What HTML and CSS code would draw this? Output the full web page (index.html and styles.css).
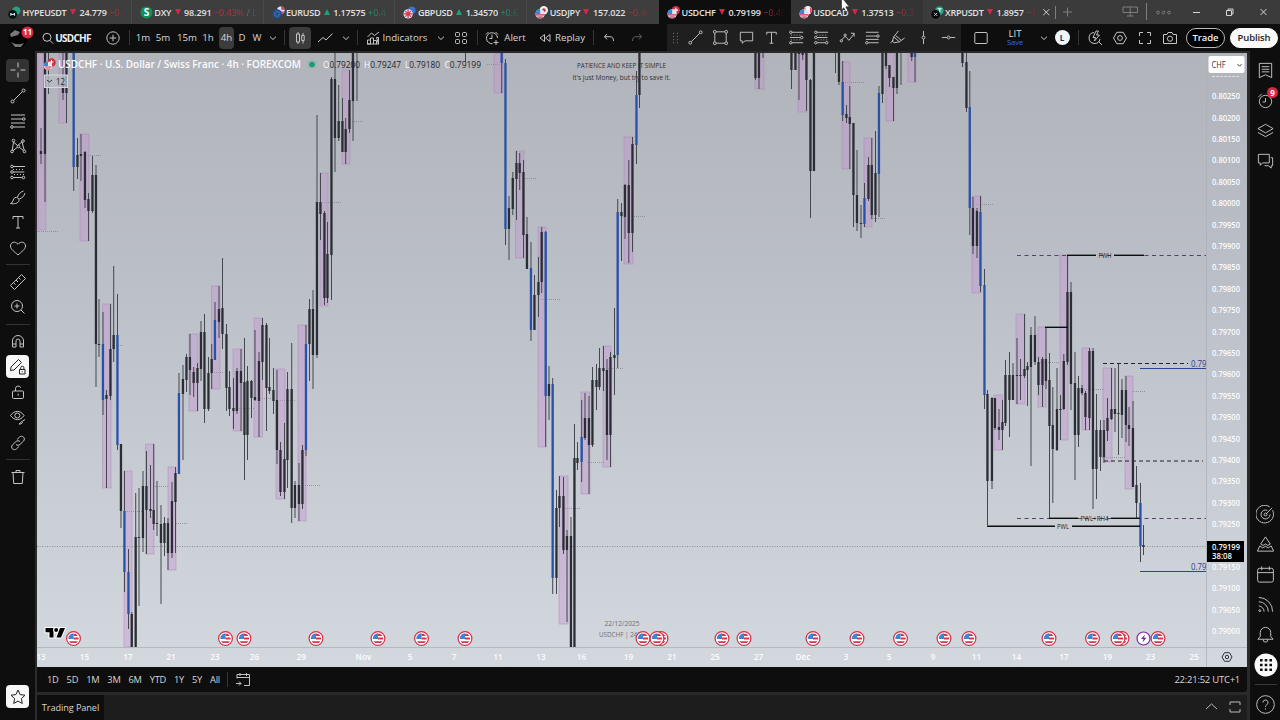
FILE: index.html
```html
<!DOCTYPE html>
<html lang="en">
<head>
<meta charset="utf-8">
<title>USDCHF 4h</title>
<link rel="stylesheet" href="styles.css">
</head>
<body>
<svg class="defs" aria-hidden="true">
  <symbol id="chev" viewBox="0 0 20 20"><path d="M7 8.700l3 2.800 3-2.800"/></symbol>
  <symbol id="search" viewBox="0 0 20 20"><circle cx="10" cy="9.300" r="4"/><path d="M12.900 12.300l3 3.200"/></symbol>
  <symbol id="plus" viewBox="0 0 20 20"><circle cx="10" cy="10" r="6.200"/><path d="M10 6.700v6.600M6.700 10h6.600"/></symbol>
  <symbol id="candles" viewBox="0 0 20 20"><path d="M6.500 6h3v8h-3zM8 4v2M8 14v2M11.700 7.500h2.500v5h-2.500zM13 5v2.500M13 12.500v3"/></symbol>
  <symbol id="line" viewBox="0 0 20 20"><path d="M3 14l5-4.500 3 2.500 6.500-6.500"/></symbol>
  <symbol id="ind" viewBox="0 0 20 20"><path d="M4.500 16v-4h3v4zM7.500 16V10h3v6M10.500 12.500h3V16M13.500 9.500h2V16zM4 16h12M4.500 9l4-4 3 2.500L16 4"/></symbol>
  <symbol id="grid4" viewBox="0 0 20 20"><rect x="4.500" y="4.500" width="4" height="4" rx="1"/><rect x="11.500" y="4.500" width="4" height="4" rx="1"/><rect x="4.500" y="11.500" width="4" height="4" rx="1"/><rect x="11.500" y="11.500" width="4" height="4" rx="1"/></symbol>
  <symbol id="alert" viewBox="0 0 20 20"><path d="M15.500 10a5.500 5.500 0 1 0-5 5.700M10 6.500v4h-2.500M4 6.500l2.500-2.500M13.500 4l2.500 2.500M14 12v5M11.500 14.500h5"/></symbol>
  <symbol id="replay" viewBox="0 0 20 20"><path d="M9.500 6.500v7l-4.500-3.500zM15 6.500v7l-4.500-3.500z"/></symbol>
  <symbol id="undo" viewBox="0 0 20 20"><path d="M8 6L5.500 8.700 8 11.400M5.500 8.700h5.500q3.500 0 3.500 4.300"/></symbol>
  <symbol id="redo" viewBox="0 0 20 20"><path d="M12 6l2.500 2.700L12 11.400M14.500 8.700H9q-3.500 0-3.500 4.300"/></symbol>
  <symbol id="dots" viewBox="0 0 20 20"><path d="M8 5v1.300M12 5v1.300M8 8.300v1.300M12 8.300v1.300M8 11.600v1.300M12 11.600v1.300M8 14.900v1.300M12 14.900v1.300"/></symbol>
  <symbol id="trend" viewBox="0 0 20 20"><circle cx="4.500" cy="15.500" r="1.500"/><circle cx="15.500" cy="4.500" r="1.500"/><path d="M5.700 14.300l8.700-8.700"/></symbol>
  <symbol id="rect" viewBox="0 0 20 20"><circle cx="4" cy="4" r="1.500"/><circle cx="16" cy="4" r="1.500"/><circle cx="4" cy="16" r="1.500"/><circle cx="16" cy="16" r="1.500"/><path d="M5.500 4h9M5.500 16h9M4 5.500v9M16 5.500v9"/></symbol>
  <symbol id="note" viewBox="0 0 20 20"><path d="M3.500 4.500h13v9H8.500L5.500 16v-2.500h-2z"/></symbol>
  <symbol id="text" viewBox="0 0 20 20"><path d="M5 7V4.500h10V7M10 4.500v11.500M8 16h4"/></symbol>
  <symbol id="long" viewBox="0 0 20 20"><path d="M5 4.500h12M3 10h11M5 15.500h12"/><path d="M4 7.500h12M4 12.500h12" stroke-dasharray="1 2"/><circle cx="4" cy="4.500" r="1.300"/><circle cx="4" cy="15.500" r="1.300"/><circle cx="15.500" cy="10" r="1.300"/></symbol>
  <symbol id="short" viewBox="0 0 20 20"><path d="M5 4.500h12M5.300 10h11M5.300 15.500h9"/><path d="M5 7.500h11M6 12.500h10" stroke-dasharray="1 2"/><circle cx="4" cy="4.500" r="1.300"/><circle cx="4" cy="10" r="1.300"/><circle cx="4" cy="15.500" r="1.300"/><circle cx="15.500" cy="15.500" r="1.300"/></symbol>
  <symbol id="path" viewBox="0 0 20 20"><path d="M4 12.500l3.500-4 4 4.500L17 6M13.500 5.500H17V9"/><circle cx="3.500" cy="13.500" r="1.200"/><circle cx="7.500" cy="7.500" r="1.200"/></symbol>
  <symbol id="fib" viewBox="0 0 20 20"><path d="M3 4.500h13.500M3 8.500h11.500M5.500 15.500h11M3 12h13.500"/><circle cx="15.700" cy="8.500" r="1.300"/><circle cx="4" cy="15.500" r="1.300"/></symbol>
  <symbol id="brush" viewBox="0 0 20 20"><path d="M2.500 16.500c3-.5 2-4.500 4.500-6 2-.8 4.500 1 4 3.300-.8 2.700-5 3.400-8.500 2.700zM9.500 10c1-3 3-5 6-6M11.300 12c2.700-1 4.700-2.500 5.700-6"/></symbol>
  <symbol id="hi" viewBox="0 0 20 20"><path d="M2.500 16l3-3M6 9.500l5-6.500M6 9.500l6 5 5.500-4M6 9.500L4.500 14l2 1.500 5.500-1M8 8l6 5"/></symbol>
  <symbol id="vline" viewBox="0 0 20 20"><path d="M10 3v5.500M10 11.500V17"/><circle cx="10" cy="10" r="1.500"/></symbol>
  <symbol id="hline" viewBox="0 0 20 20"><path d="M3 10h5.500M11.500 10H17"/><circle cx="10" cy="10" r="1.500"/></symbol>
  <symbol id="square" viewBox="0 0 20 20"><rect x="3.800" y="4.500" width="12.400" height="11" rx="1"/></symbol>
  <symbol id="quick" viewBox="0 0 20 20"><path d="M9 4.500a5.500 5.500 0 1 0 6 6.500M13.500 13.500L17 17M11 3L8 9.500h2.500L9.500 13l5-6h-3l2-4z"/></symbol>
  <symbol id="hex" viewBox="0 0 20 20"><path d="M6.800 4.300h6.400l3.300 5.700-3.300 5.700H6.800L3.500 10z"/><circle cx="10" cy="10" r="2.400"/></symbol>
  <symbol id="full" viewBox="0 0 20 20"><path d="M4.500 8V4.500H8M12 4.500h3.500V8M15.500 12v3.500H12M8 15.500H4.500V12"/></symbol>
  <symbol id="cam" viewBox="0 0 20 20"><path d="M3.500 6.500H7L8 4.500h4l1 2h3.500v9h-13z"/><circle cx="10" cy="10.700" r="2.600"/></symbol>
  <symbol id="cross" viewBox="0 0 20 20"><path d="M10 2.500v5M10 12.500v5M2.500 10h5M12.500 10h5"/></symbol>
  <symbol id="fibl" viewBox="0 0 20 20"><path d="M3 4h14M3 8h11.500M3 12h14M6 16h11"/><circle cx="15.800" cy="8" r="1.300"/><circle cx="4" cy="16" r="1.300"/></symbol>
  <symbol id="xabcd" viewBox="0 0 20 20"><circle cx="4" cy="15.500" r="1.300"/><circle cx="5.500" cy="4.500" r="1.300"/><circle cx="10.500" cy="10.500" r="1.300"/><circle cx="15" cy="5" r="1.300"/><circle cx="16.500" cy="15.500" r="1.300"/><path d="M4.300 14L5.500 6l4 3.500 4.500-3.500 2.200 8M5 14.700l4.500-3.500M11.500 11.300l4 3.300"/></symbol>
  <symbol id="heart" viewBox="0 0 20 20"><path d="M10 17C7 14 2.500 11.500 2.500 8c0-4 4.700-5.300 7.500-1.700C12.800 2.700 17.500 4 17.500 8c0 3.500-4.500 6-7.500 9z"/></symbol>
  <symbol id="ruler" viewBox="0 0 20 20"><path d="M2.500 13.500L13.500 2.500 17.500 6.500 6.500 17.500zM5.500 10.500l2 2M8 8l2 2M10.500 5.500l2 2"/></symbol>
  <symbol id="zoom" viewBox="0 0 20 20"><circle cx="9" cy="9" r="5.500"/><path d="M13 13l3.500 3.500M9 6.500v5M6.500 9h5"/></symbol>
  <symbol id="magnet" viewBox="0 0 20 20"><path d="M4.500 16V10a5.500 5.500 0 0 1 11 0v6h-3.500V10a2 2 0 0 0-4 0v6zM4.500 13H8M12 13h3.500"/></symbol>
  <symbol id="penlock" viewBox="0 0 20 20"><path d="M2.500 13.500l.5-3.500 7.500-7.500 3 3-7.500 7.500zM11.500 12.500h5.500v4.500h-5.500zM12.700 12.500v-1.700a1.600 1.600 0 0 1 3.200 0v1.700M14.200 14.200v1"/></symbol>
  <symbol id="lock" viewBox="0 0 20 20"><rect x="4.500" y="9" width="11" height="7.500" rx="1"/><path d="M7.500 9V6.500a2.700 2.700 0 0 1 5.200-.8M10.200 11.700v2"/></symbol>
  <symbol id="eye" viewBox="0 0 20 20"><path d="M2.500 8.500C6.500 3 12.500 3 16 8.500 12.500 14 6.500 14 2.500 8.500z"/><circle cx="9.300" cy="8.500" r="2.500"/><path d="M11 17c2 0 1-2 2.500-2.200 1.500 0 1 2.500-2.500 2.200zM14 14.500l3-2"/></symbol>
  <symbol id="link" viewBox="0 0 20 20"><path d="M9 6.500l2.500-2.400c3-2.500 6.500 1.200 4 4L12 11.500c-1.200 1-2.800 1-4 0M11 13.500l-2.500 2.400c-3 2.500-6.500-1.200-4-4L8 8.500c1.200-1 2.800-1 4 0"/></symbol>
  <symbol id="trash" viewBox="0 0 20 20"><path d="M3.500 5.500h13M8 5.500v-2h4v2M5 5.500l.7 11h8.600l.7-11"/></symbol>
  <symbol id="star" viewBox="0 0 20 20"><path d="M10 3l2.100 4.600 4.900.6-3.600 3.400.9 4.900L10 14.100l-4.300 2.400.9-4.900L3 8.200l4.900-.6z"/></symbol>
  <symbol id="list" viewBox="0 0 20 20"><path d="M3.500 2.500h13v15l-6.500-3-6.500 3zM6 6h8M6 8.700h8M6 11.400h8"/></symbol>
  <symbol id="clock" viewBox="0 0 20 20"><circle cx="10" cy="11" r="6.500"/><path d="M10 7.500V11.500H7M2.500 6.500l3.500-3.500"/></symbol>
  <symbol id="layers" viewBox="0 0 20 20"><path d="M10 3.500l8 4.500-8 4.500-8-4.500zM2 12l8 4.500 8-4.500"/></symbol>
  <symbol id="chat" viewBox="0 0 20 20"><path d="M2.500 3.500h11.500v9H7L4.500 15v-2.500h-2zM15.500 7h2v8.500h-1.500V18L13 15.500H9"/></symbol>
  <symbol id="target" viewBox="0 0 20 20"><path d="M17.500 5.500A9.300 9.300 0 1 1 14.500 2M14.700 10A4.700 4.700 0 1 1 12 5.700M10.500 9.500L17 3"/><circle cx="10" cy="10" r="1.500"/></symbol>
  <symbol id="mount" viewBox="0 0 20 20"><path d="M10 2l5 7.500-2.500 1.500L10 9.500 7.500 11 5 9.500zM4 11.500L1.500 17h17L16 11.500l-3 2-3-1.500-3 1.500z"/></symbol>
  <symbol id="cal" viewBox="0 0 20 20"><rect x="1.700" y="3.500" width="16.600" height="14.500" rx="2"/><path d="M1.700 8h16.600M6 1.500V5.500M14 1.500V5.500"/></symbol>
  <symbol id="rss" viewBox="0 0 20 20"><path d="M3 11.500a6 6 0 0 1 5.500 6M3 7a10.500 10.500 0 0 1 10 10.500M3 2.500a15 15 0 0 1 14.500 15"/><circle cx="4" cy="16.500" r="1"/></symbol>
  <symbol id="bell" viewBox="0 0 20 20"><path d="M2 15l2.500-3V8a5.500 5.500 0 0 1 11 0v4l2.500 3zM7.500 15.500a2.500 2.500 0 0 0 5 0"/></symbol>
  <symbol id="help" viewBox="0 0 20 20"><circle cx="10" cy="10" r="9.300"/><path d="M7.300 8a2.700 2.700 0 1 1 3.800 2.400q-1.100.5-1.100 2M10 14v1.300"/></symbol>
  <symbol id="goto" viewBox="0 0 20 20"><path d="M4 8.500v-4h12.500v11H11M4 7.500h12.500M7 3v3M13.500 3v3M3 13.500h5M6 11.500l2 2-2 2"/></symbol>
  <symbol id="flag" viewBox="-8 -8 16 16"><circle r="6.900" fill="#fff" stroke="#d02f45" stroke-width="1.200"/><circle r="5.200" fill="#fff"/><path d="M0-4.800H2.200L4.500-2.600H0zM0-.9H5.100V1H-5.100V.9H0zM-4.400 2.800H4.400L2.800 4.500H-2.800z" fill="#d6364b" stroke="none"/><path d="M0-5.200V.6H-5.200A5.200 5.200 0 0 1 0-5.200z" fill="#3d86d6" stroke="none"/></symbol>
</svg>

<header class="tabs">
  <div class="tab"><svg class="pair" viewBox="0 0 14 14"><circle cx="9" cy="5" r="4.500" fill="#25a17f"/><circle cx="5" cy="9" r="4.700" fill="#07120f"/><path d="M3 7.500v3M3 9h4M7 7.500v3" stroke="#cde" stroke-width="1.200"/></svg><b>HYPEUSDT</b><u class="dn"></u><span>24.779</span><em class="neg">−0.</em></div>
  <div class="tab"><svg class="pair" viewBox="0 0 14 14"><circle cx="7" cy="7" r="6.500" fill="#10905b"/><text x="7" y="11" class="dollar">S</text></svg><b>DXY</b><u class="dn"></u><span>98.291</span><em class="neg wide">−0.43% <q>/ L</q></em></div>
  <div class="tab"><svg class="pair" viewBox="0 0 14 14"><circle cx="9.500" cy="4.500" r="4" fill="#dfe3ee"/><path d="M10 1h2l1.500 3H10zM9 6h4l-1 2H9z" fill="#d6364b"/><circle cx="5.500" cy="8.500" r="5" fill="#1c4f9c"/><circle cx="5.500" cy="8.500" r="2.600" fill="none" stroke="#8f9f70" stroke-dasharray="1 1"/></svg><b>EURUSD</b><u class="up"></u><span>1.17575</span><em class="pos">+0.4</em></div>
  <div class="tab"><svg class="pair" viewBox="0 0 14 14"><circle cx="9.500" cy="4.500" r="4" fill="#3d72c6"/><circle cx="5.500" cy="8.500" r="5" fill="#dfe3ee"/><path d="M5.500 4v9M1 8.500h9M2.500 5.500l6 6M8.500 5.500l-6 6" stroke="#d6364b" stroke-width="1.300"/></svg><b>GBPUSD</b><u class="up"></u><span>1.34570</span><em class="pos">+0.6</em></div>
  <div class="tab last"><svg class="pair" viewBox="0 0 14 14"><circle cx="9.500" cy="4.500" r="4.500" fill="#f2f2f4"/><circle cx="9.500" cy="4.500" r="2" fill="#d02f45"/><circle cx="5.500" cy="8.500" r="5" fill="#dfe3ee"/><path d="M1 9.500h9M2.500 12h6" stroke="#d6364b" stroke-width="1.200"/><path d="M5.500 3.500v5h-5a5 5 0 0 1 5-5z" fill="#3d86d6"/></svg><b>USDJPY</b><u class="dn"></u><span>157.022</span><em class="neg">−0.46</em></div>
  <div class="tab on"><svg class="pair" viewBox="0 0 14 14"><circle cx="9.500" cy="4.500" r="4.500" fill="#d02f45"/><path d="M9.500 2v5M7 4.500h5" stroke="#fff" stroke-width="1.300"/><circle cx="5.500" cy="8.500" r="5" fill="#dfe3ee"/><path d="M1 9.500h9M2.500 12h6" stroke="#d6364b" stroke-width="1.200"/><path d="M5.500 3.500v5h-5a5 5 0 0 1 5-5z" fill="#3d86d6"/></svg><b>USDCHF</b><u class="dn"></u><span>0.79199</span><em class="neg">−0.46</em></div>
  <div class="tab hover"><svg class="pair" viewBox="0 0 14 14"><circle cx="9.500" cy="4.500" r="4.500" fill="#f2f2f4"/><path d="M7 1v7a4.500 4.500 0 0 1 0-7M12 1v7a4.500 4.500 0 0 0 0-7" fill="#d02f45"/><circle cx="5.500" cy="8.500" r="5" fill="#dfe3ee"/><path d="M1 9.500h9M2.500 12h6" stroke="#d6364b" stroke-width="1.200"/><path d="M5.500 3.500v5h-5a5 5 0 0 1 5-5z" fill="#3d86d6"/></svg><b>USDCAD</b><u class="dn"></u><span>1.37513</span><em class="neg">−0.3</em></div>
  <div class="tab end"><svg class="pair" viewBox="0 0 14 14"><circle cx="9" cy="5" r="4.700" fill="#25a17f"/><path d="M7 3h4.500M9.500 3v4" stroke="#fff" stroke-width="1.200"/><circle cx="5" cy="9" r="4.700" fill="#07090c"/><path d="M3.300 7.300l3.400 3.400M6.700 7.300l-3.400 3.400" stroke="#ccd"/></svg><b>XRPUSDT</b><u class="dn"></u><span>1.8957</span><em class="neg">−1</em></div>
  <svg class="win" viewBox="0 0 226 24"><path d="M-10.700 9.200l6 6M-4.700 9.200l-6 6"/><path class="dim" d="M13.500 7.500v9M9 12h9M1.500 6v13M92.500 3v17"/><path class="dim" d="M69 7h14.500v5.500H69zM76.200 7v9M73 16h6.500"/><g class="dim"><circle cx="104" cy="12.500" r="1.400"/><circle cx="109.500" cy="12.500" r="1.400"/><circle cx="115" cy="12.500" r="1.400"/></g><path d="M139 12.500h7M172.500 10.500h5v5h-5zM174 10.500V9h5v5h-1.500M206.500 9l6 6M212.500 9l-6 6"/></svg>
</header>

<nav class="toolbar">
  <div class="bar-left">
    <div class="cell"><svg class="avatar" viewBox="0 0 32 26"><circle cx="15" cy="13.500" r="9.500" fill="#020202"/><path d="M7 9l5-4 5 2-2 3-7 2zM8 17q6 4 13 1l-3 4h-6z" fill="#75777a"/><circle cx="24.500" cy="7.500" r="6" fill="#dc2740"/><text x="24.500" y="10.200" class="badge">11</text></svg></div>
    <div class="cell"><svg class="ic"><use href="#search"/></svg></div>
    <div class="cell bold">USDCHF</div><i></i>
    <div class="cell"><svg class="ic"><use href="#plus"/></svg></div><i></i><s></s><i></i>
    <div class="cell">1m</div><div class="cell">5m</div><div class="cell">15m</div><div class="cell">1h</div><i></i>
    <div class="cell sel">4h</div><div class="cell">D</div><div class="cell">W</div>
    <div class="cell"><svg class="ic"><use href="#chev"/></svg></div><i></i><s></s><i></i>
    <div class="cell sel"><svg class="ic"><use href="#candles"/></svg></div><i></i>
    <div class="cell"><svg class="ic"><use href="#line"/></svg></div>
    <div class="cell"><svg class="ic"><use href="#chev"/></svg></div><s></s><i></i>
    <div class="cell"><svg class="ic"><use href="#ind"/></svg></div>
    <div class="cell">Indicators</div>
    <div class="cell"><svg class="ic"><use href="#chev"/></svg></div>
    <div class="cell"><svg class="ic"><use href="#grid4"/></svg></div><i></i><s></s><i></i>
    <div class="cell"><svg class="ic"><use href="#alert"/></svg></div>
    <div class="cell">Alert</div><i></i>
    <div class="cell"><svg class="ic"><use href="#replay"/></svg></div>
    <div class="cell">Replay</div><i></i><s></s><i></i>
    <div class="cell"><svg class="ic"><use href="#undo"/></svg></div><i></i>
    <div class="cell faint"><svg class="ic"><use href="#redo"/></svg></div>
  </div>
  <div class="bar-draw">
    <div class="cell grip"><svg class="ic"><use href="#dots"/></svg></div>
    <div class="cell"><svg class="ic"><use href="#trend"/></svg></div>
    <div class="cell"><svg class="ic"><use href="#rect"/></svg></div>
    <div class="cell"><svg class="ic"><use href="#note"/></svg></div>
    <div class="cell"><svg class="ic"><use href="#text"/></svg></div>
    <div class="cell"><svg class="ic"><use href="#long"/></svg></div>
    <div class="cell"><svg class="ic"><use href="#short"/></svg></div>
    <div class="cell"><svg class="ic"><use href="#path"/></svg></div>
    <div class="cell"><svg class="ic"><use href="#fib"/></svg></div>
    <div class="cell"><svg class="ic"><use href="#hi"/></svg></div>
    <div class="cell"><svg class="ic"><use href="#vline"/></svg></div>
    <div class="cell"><svg class="ic"><use href="#hline"/></svg></div>
  </div>
  <div class="bar-right">
    <i></i><div class="cell"><svg class="ic"><use href="#square"/></svg></div><i></i>
    <div class="cell layout"><span>LIT</span><small>Save</small></div><i></i>
    <div class="cell"><svg class="ic"><use href="#chev"/></svg></div>
    <div class="cell"><span class="user">L</span></div><i></i><s></s><i></i>
    <div class="cell"><svg class="ic"><use href="#quick"/></svg></div>
    <div class="cell"><svg class="ic"><use href="#hex"/></svg></div>
    <div class="cell"><svg class="ic"><use href="#full"/></svg></div>
    <div class="cell"><svg class="ic"><use href="#cam"/></svg></div><i></i>
    <div class="pill">Trade</div><i></i><div class="pill white">Publish</div>
  </div>
</nav>

<main class="work">
  <aside class="tools">
    <div class="tool shade"><svg class="ic"><use href="#cross"/></svg></div>
    <div class="tool"><svg class="ic"><use href="#trend"/></svg></div>
    <div class="tool"><svg class="ic"><use href="#fibl"/></svg></div>
    <div class="tool"><svg class="ic"><use href="#xabcd"/></svg></div>
    <div class="tool"><svg class="ic"><use href="#short"/></svg></div>
    <div class="tool"><svg class="ic"><use href="#brush"/></svg></div>
    <div class="tool"><svg class="ic"><use href="#text"/></svg></div>
    <div class="tool"><svg class="ic"><use href="#heart"/></svg></div>
    <hr>
    <div class="tool"><svg class="ic"><use href="#ruler"/></svg></div>
    <div class="tool"><svg class="ic"><use href="#zoom"/></svg></div>
    <hr>
    <div class="tool"><svg class="ic"><use href="#magnet"/></svg></div>
    <div class="tool lit"><svg class="ic"><use href="#penlock"/></svg></div>
    <div class="tool"><svg class="ic"><use href="#lock"/></svg></div>
    <div class="tool"><svg class="ic"><use href="#eye"/></svg></div>
    <div class="tool"><svg class="ic"><use href="#link"/></svg></div>
    <hr>
    <div class="tool"><svg class="ic"><use href="#trash"/></svg></div>
    <div class="tool lit fav"><svg class="ic"><use href="#star"/></svg></div>
  </aside>

  <section class="center">
    <svg id="chart" class="chart" viewBox="37 53 1210 614"></svg>
    <div class="ranges">
      <span>1D</span><span>5D</span><span>1M</span><span>3M</span><span>6M</span><span>YTD</span><span>1Y</span><span>5Y</span><span>All</span>
      <s></s><svg class="ic"><use href="#goto"/></svg>
      <time>22:21:52 UTC+1</time>
    </div>
    <footer class="panel">
      <div class="panel-tab">Trading Panel</div>
      <svg class="panel-ic" viewBox="0 0 46 24"><path d="M5 14l5.500-5 5.500 5M29 10V7h3M36 7h3v3M39 14v3h-3M32 17h-3v-3M32 7h4M32 17h4"/></svg>
    </footer>
  </section>

  <aside class="side">
    <div class="wid"><svg class="ic"><use href="#list"/></svg></div>
    <div class="wid"><svg class="ic"><use href="#clock"/></svg><span class="nine">9</span></div>
    <div class="wid"><svg class="ic"><use href="#layers"/></svg></div>
    <div class="wid"><svg class="ic"><use href="#chat"/></svg></div>
    <div class="grow"></div>
    <div class="wid"><svg class="ic"><use href="#target"/></svg></div>
    <div class="wid"><svg class="ic"><use href="#mount"/></svg></div>
    <div class="wid"><svg class="ic"><use href="#cal"/></svg></div>
    <div class="wid"><svg class="ic"><use href="#rss"/></svg></div>
    <div class="wid"><svg class="ic"><use href="#bell"/></svg></div>
    <div class="wid"><svg class="apps" viewBox="0 0 24 24"><circle cx="12" cy="12" r="11.500" fill="#fafafa"/><path d="M6 7.300h12M6 12h12M6 16.700h12" stroke="#111" stroke-width="2.600" stroke-dasharray="2.600 2.100"/></svg></div>
    <hr>
    <div class="wid"><svg class="ic"><use href="#help"/></svg></div>
  </aside>
</main>
<svg class="cursor" viewBox="0 0 9 14"><path d="M.5-3v13l2.300-2.200 2 4 2-1-2-4h3.500z" fill="#fff" stroke="#222" stroke-width=".6"/></svg>
<script src="chart.js"></script>
</body>
</html>
```
FILE: styles.css
```css
* { box-sizing: border-box; }
body {
  margin: 0; width: 1280px; height: 720px; overflow: hidden;
  display: flex; flex-direction: column; position: relative;
  background: #2a2a2b; color: #d6d6d6;
  font: 500 9.7px "Open Sans", "Noto Sans", sans-serif;
}
svg { fill: none; stroke: none; display: block; overflow: visible; }
.defs { position: absolute; width: 0; height: 0; }
.ic { width: 20px; height: 20px; flex: none; stroke: #c4c4c4; stroke-width: 1; }

.tabs { display: flex; height: 24px; flex: none; background: #3b3b3b; }
.tab {
  width: 131.8px; flex: none; display: flex; align-items: center; gap: 3.5px;
  padding-left: 8px; overflow: hidden; white-space: nowrap;
  border-right: 1px solid #4a4a4a; font-size: 9px; background: #3e3e3e;
}
.tab.last { border-right: 0; border-radius: 0 0 4px 0; }
.tab.on { background: #0e0e0e; border: 0; }
.tab.hover { background: #343434; border: 0; border-radius: 0 0 0 4px; }
.tab.end { background: none; border: 0; padding-right: 21px; }
.tab b { font-weight: 600; color: #e2e2e2; letter-spacing: -0.25px; }
.tab span { color: #e0e0e0; font-weight: 600; letter-spacing: -0.15px; }
.tab em {
  font-style: normal; margin-left: -1px; width: 25px; flex: none;
  -webkit-mask-image: linear-gradient(90deg, #000 10%, transparent 90%);
  mask-image: linear-gradient(90deg, #000 10%, transparent 90%);
}
.tab em.wide {
  width: 46px;
  -webkit-mask-image: linear-gradient(90deg, #000 50%, transparent 98%);
  mask-image: linear-gradient(90deg, #000 50%, transparent 98%);
}
.tab.end em { width: 14px; }
.tab q { quotes: none; color: #999; }
.pair { width: 13px; height: 13px; flex: none; margin-right: -2px; }
.dollar { font: 700 11px "Open Sans", sans-serif; fill: #fff; text-anchor: middle; }
.neg { color: #c82b43; }
.pos { color: #1f9f79; }
.dn, .up { width: 0; height: 0; border: 3.3px solid transparent; flex: none; }
.dn { border-top: 6px solid #cf2a45; border-bottom: 0; }
.up { border-bottom: 6px solid #1f9f79; border-top: 0; }
.win { flex: 1; height: 24px; stroke: #d4d4d4; }
.win .dim { stroke: #7e7e7e; }

.toolbar { display: flex; height: 27px; flex: none; background: #0e0e0e; }
.cell { display: flex; align-items: center; justify-content: center; white-space: nowrap; height: 27px; min-width: 0; }
.toolbar s, .ranges s { width: 1px; background: #373737; height: 15px; align-self: center; }
.bar-left {
  display: grid; width: 667px; flex: none;
  grid-template-columns: 36px 22px 30px 15px 20px 6px 1px 4px 18px 22px 26px 16px 3px 15px 16px 14px 18px 2px 1px 4px 22px 4px 20px 22px 1px 5px 20px 44px 28px 12px 10px 1px 4px 20px 26px 7px 20px 30px 8px 1px 6px 18px 10px 18px;
}
.bold { font-weight: 700; font-size: 10px; color: #eee; letter-spacing: -0.75px; }
.sel { background: #3c3c3c; border-radius: 4px; height: 22px; align-self: center; }
.faint { opacity: .45; }
.avatar { width: 32px; height: 26px; flex: none; margin-left: 2px; }
.badge { font: 700 8px "Open Sans", sans-serif; fill: #fff; text-anchor: middle; }
.bar-draw { display: flex; width: 294px; flex: none; background: #1f1f1f; }
.bar-draw .cell { flex: 1; }
.bar-draw .grip { flex: 0 0 16px; opacity: .5; }
.bar-draw .ic { width: 19px; height: 19px; }
.bar-right {
  display: grid;
  grid-template-columns: 10px 20px 9px 30px 5px 18px 18px 7px 1px 4px 24px 26px 24px 26px 3px 39px 5px 48px;
}
.layout { flex-direction: column; color: #ddd; padding-top: 1px; }
.layout span { line-height: 11px; margin-top: -4px; }
.layout small { font-size: 7.5px; line-height: 10px; height: 8px; color: #2f6cf0; margin-top: -2px; }
.user { width: 15px; height: 15px; border-radius: 50%; background: #eef5fd; color: #234; font-size: 8px; line-height: 15px; text-align: center; font-weight: 700; }
.pill { height: 20px; align-self: center; border-radius: 10px; border: 1px solid #bbb; background: #000; color: #f2f2f2; font-weight: 600; font-size: 9.5px; letter-spacing: -.1px; line-height: 17px; text-align: center; }
.pill.white { background: #fafafa; color: #222; border-color: #fafafa; }

.work { display: flex; flex: 1; min-height: 0; }
.tools { width: 35px; margin-right: 2px; background: #0e0e0e; padding-top: 6.5px; display: flex; flex-direction: column; align-items: center; }
.tool { width: 23px; height: 23px; margin: 1.2px 0; flex: none; display: flex; align-items: center; justify-content: center; border-radius: 4px; }
.shade { background: #333; }
.lit { background: #f7f7f7; }
.lit .ic { stroke: #222; }
.fav { margin-top: auto; margin-bottom: 12px; }
.tools hr { width: 24px; height: 1px; border: 0; background: #333; margin: 3.8px 0; flex: none; }

.center { width: 1210px; flex: none; padding-top: 2px; display: flex; flex-direction: column; }
.chart { width: 1210px; height: 614px; flex: none; overflow: hidden; }
.ranges { height: 25px; flex: none; background: #0e0e0e; display: flex; align-items: center; gap: 8px; padding: 0 7px 0 10px; font-size: 9.3px; letter-spacing: -.25px; border-radius: 0 0 3px 0; }
.ranges span:last-of-type { margin-right: -1px; }
.ranges .ic { margin-left: -3px; }
.ranges time { margin-left: auto; font-size: 9.5px; }
.panel { margin-top: 3px; flex: 1; display: flex; justify-content: space-between; background: #1d1d1d; }
.panel-tab { width: 67px; background: #0e0e0e; text-align: center; line-height: 25px; font-size: 9.2px; letter-spacing: -.1px; white-space: nowrap; }
.panel-ic { width: 46px; height: 24px; stroke: #bbb; }

.side { flex: 1; margin-left: 3px; background: #0e0e0e; padding: 4.2px 0 0 1px; display: flex; flex-direction: column; align-items: center; }
.wid { height: 30.1px; flex: none; display: flex; align-items: center; position: relative; }
.side .ic { width: 19px; height: 19px; }
.apps { width: 24px; height: 24px; }
.grow { flex: 1; }
.side hr { width: 22px; height: 1px; border: 0; background: #3a3a3a; margin: 4px 0 5px; }
.nine { position: absolute; right: -3px; top: 2px; width: 11px; height: 11px; border-radius: 50%; background: #dc2740; color: #fff; font-size: 8px; line-height: 11px; font-weight: 700; text-align: center; }
.cursor { position: absolute; left: 841px; top: 0; width: 9px; height: 14px; overflow: hidden; }

.chart text { font-family: "Open Sans", "Noto Sans", sans-serif; }
.price { font-size: 8.5px; font-weight: 600; fill: #fbfcfe; }
.date { font-size: 8.2px; font-weight: 600; fill: #fbfcfe; text-anchor: middle; }
.title { font-size: 10.5px; font-weight: 600; fill: #fbfbfd; }
.ohlc { font-size: 9px; fill: #22252b; }
.ohlc tspan { fill: #fbfbfd; }
.memo { font-size: 8px; fill: #2e3138; text-anchor: middle; }
.stamp { font-size: 8px; fill: #6d7077; }
.tag { font-size: 7px; fill: #1b1d22; text-anchor: middle; }
.level { font-size: 9px; fill: #27408f; }
```
FILE: chart.js
```javascript
const svg = document.getElementById('chart');
let out = '';
const rect = (x, y, w, h, a) => { out += `<rect x="${x}" y="${y}" width="${w}" height="${h}" ${a}/>`; };
const line = (x1, y1, x2, y2, a) => { out += `<line x1="${x1}" y1="${y1}" x2="${x2}" y2="${y2}" ${a}/>`; };
const text = (x, y, cls, s, w) => {
  out += `<text x="${x}" y="${y}" class="${cls}"${w ? ` textLength="${w}" lengthAdjust="spacingAndGlyphs"` : ''}>${s}</text>`;
};

out += '<defs><linearGradient id="bg" x1="0" y1="0" x2="0" y2="1"><stop offset="0" stop-color="#b1b4ba"/><stop offset=".35" stop-color="#babec6"/><stop offset=".7" stop-color="#c8ccd3"/><stop offset="1" stop-color="#d3d7de"/></linearGradient></defs>';
rect(37, 53, 1210, 614, 'fill="url(#bg)"');

// last price
line(37, 546.5, 1206, 546.5, 'stroke="#8c8f96" stroke-dasharray="1 1.500"');

// session opening levels: x1, y, x2
[[37,231,59],[88,155,102],[112,345,123],[125,511,143],[153,486,168],[176,523,188],[212,372,224],[233,408,254],[258,398,273],[280,400,295],[305,485,320],[324,202,341],[352,121,363],[487,64,500],[525,178,537],[541,299,560],[563,508,580],[587,462,605],[608,368,624],[634,216,646],[845,82,864],[870,218,885],[976,204,994],[1040,362,1060],[1084,389,1104],[1100,457,1125],[1132,391,1146]]
  .forEach(([a, y, b]) => line(a, y + .5, b, y + .5, 'stroke="#85888f" stroke-width=".8" stroke-dasharray="1 1"'));

// session boxes: x1, y1, x2, y2
[[38,53,46,230],[59,53,66.5,123],[80,134,89,241],[102.5,304,111,488],[124,471,132,647],[145.5,444,154,554],[168,467,176,570],[189,334,198,411],[211.5,286,220,389],[233,349,242,431],[254,318,262.5,437],[276,369,285,499],[298,325,306,521],[320,173,328,306],[342,70,350,164],[494,53,503,93],[515.5,151,524,258],[538,227,546,447],[559,476,568,624],[581,392,590,494],[603,346,611,467],[624,137,633,264],[755,53,764,89],[798,53,807,112],[842,62,850,169],[864,138,872,227],[886,53,894,121],[908,53,916,82],[972,196,981,293],[994,395,1002.5,450],[1016,314,1025,404],[1038,327,1046,407],[1060,255,1068,440],[1082,348,1090,430],[1103,368,1112,462],[1125,376,1133,489]]
  .forEach(([a, y, b, z]) => rect(a, y, b - a, z - y, 'fill="#c490d2" fill-opacity=".36" stroke="#a878b4" stroke-opacity=".55" stroke-width=".7"'));

// candles: x, high, body top, body bottom, low, 1 = blue
const candles = [
[41,128,151,154,164],[45,53,53,154,202],[48.5,53,53,53,94],[63,53,85,93,100],[66.5,53,53,93,123],[73.7,53,53,167,191,1],[77.5,138,155,167,179],[81,134,154,156,181],[85,151,152,200,208],[88.5,193,199,211,241],[92.5,156,175,211,213],[96,165,175,344,387],[99,299,344,345,357],[103,312,344,400,415,1],[106.5,390,395,399,488],[110.5,304,349,396,400],[113.7,266,335,349,362],[117.5,294,335,445,450,1],[121,444,444,511,528],[124.5,471,511,572,592,1],[128.5,549,572,614,629,1],[131.8,612,614,647,647],[135.7,493,537,647,647],[139,488,537,538,606],[143,471,486,538,552],[146.5,451,486,510,554],[150.5,465,509,511,518],[153.7,444,510,524,530],[157,481,523,524,536],[161,505,524,543,604],[164.5,517,523,543,556],[168,518,523,553,570],[172,482,501,553,558],[175.5,467,473,502,553],[179,373,393,474,474,1],[183,365,379,394,460],[186.5,354,357,380,392],[190,334,357,370,395],[193.7,367,372,383,397],[197.5,363,368,383,411],[201,321,332,369,381],[204.5,314,332,409,423],[208.5,357,373,409,411],[211.7,344,359,373,389],[215,302,320,360,360,1],[219,286,309,322,338],[222.5,258,308,334,349],[226.5,324,334,388,411],[229.5,371,387,409,416],[233.5,378,408,411,429],[237,368,371,411,414],[241,349,371,383,431],[244.5,338,382,435,480],[247.5,366,381,435,460],[251.5,380,381,398,418],[255,330,397,400,401],[259,352,361,401,437],[262.5,318,325,362,380],[266.5,323,325,388,431],[269.5,338,387,391,394],[273.5,368,390,401,414],[277,370,400,450,464],[280.5,442,450,492,496],[284.5,423,459,492,499],[287.5,372,389,460,488],[291.7,343,389,508,523],[295,481,485,508,518],[299,463,485,504,521],[302.5,445,450,504,509],[306,325,344,450,456,1],[309.5,299,309,344,381],[313,290,309,355,389],[317,115,202,355,358],[320.5,173,202,214,240],[324.5,211,213,298,305],[327.5,222,254,298,303],[331.5,77,79,255,300],[335,53,79,138,172],[338.7,85,121,138,141],[342.5,98,121,152,152],[345.7,118,129,152,164],[349.5,70,100,129,133],[353,53,53,101,141],[357,53,53,53,101],
[465.5,53,53,53,62],[501.7,53,53,63,93,1],[505.5,59,63,229,245,1],[509,196,208,229,260],[512.8,172,178,209,215],[516.5,151,163,179,220],[519.7,153,163,173,190],[523.5,160,172,235,258],[527,217,234,269,269],[531,242,268,330,341,1],[534.5,275,295,330,330],[538.5,257,282,295,317],[541.7,227,232,282,293],[545.7,231,232,396,447,1],[549,366,384,396,420],[552.7,378,384,578,594,1],[556.5,490,508,578,594],[559.5,476,496,508,527],[563.5,477,496,550,554],[567,530,536,550,622],[571,517,536,647,647],[574.5,424,458,647,647],[577.5,442,458,463,470],[581.7,400,437,462,482,1],[585,393,418,438,440],[589,396,418,445,494],[592.5,367,380,445,447],[596.5,364,380,387,410],[599.5,348,368,387,390],[603.5,346,368,371,391],[607,359,370,435,460],[610.5,352,357,435,467],[614.5,308,355,358,395],[617.7,199,212,355,368,1],[621.5,203,212,216,261],[625,184,185,217,239],[628.8,160,185,233,263],[632.5,137,144,233,252],[636.5,71,95,145,164,1],[639.5,53,53,95,108],
[755.5,53,53,78,80],[759,53,53,78,89],[763,53,53,53,58],[791.5,53,53,70,89],[795.5,53,53,70,70],[799,53,53,54,100],[802.7,53,53,55,60],[806.5,53,53,80,111],[810.5,79,80,171,218],[814,53,53,171,171],[835.5,53,53,53,73],[839,53,53,82,85],[842.7,61,82,115,121,1],[846.5,105,114,118,123],[849.8,86,117,124,169],[853.5,123,123,195,227],[857,150,195,223,231],[861,205,223,224,238],[864.5,183,198,224,227,1],[868.5,157,165,199,201],[871.8,138,165,215,219],[875.5,131,173,215,222],[879,86,93,174,217,1],[882.5,53,53,94,103],[886,53,53,66,69],[889.5,65,65,78,87],[893.5,77,77,88,121],[897,53,53,88,94],[901,53,53,53,85],[911.7,53,53,57,61],[915,53,53,57,82,1],[962.5,53,53,63,67],[966.5,53,62,108,112],[969.8,71,107,208,235,1],[973,197,208,246,254],[977,208,211,246,258],[980.5,196,212,286,292,1],[984.5,269,285,395,409,1],
[987.5,390,394,481,525],[992,397,398,481,489],[995,398,398,428,430],[999,409,427,430,440],[1002.5,400,422,430,450],[1005.5,360,375,423,426],[1009.5,352,375,400,437],[1013,363,375,400,400],[1017,338,375,376,404],[1020.5,359,375,376,400],[1024.5,314,369,376,378],[1027.5,362,366,370,406],[1031,327,335,367,466],[1035,316,335,362,365],[1038.5,357,362,385,395],[1042.5,357,359,385,407],[1046,327,359,381,389],[1049.5,353,380,426,518],[1052.8,387,425,449,503],[1057,368,409,450,451],[1060.5,395,409,410,440],[1063.8,354,361,409,410],[1067.5,255,292,362,365],[1071,282,292,384,410],[1075,352,383,435,480],[1078.5,376,388,435,447],[1082,385,388,393,395],[1085.5,391,393,417,430],[1089.5,348,351,418,430],[1093,348,351,469,509],[1096.5,394,430,469,499],[1100.5,420,430,457,471],[1104,420,430,457,463],[1107.5,398,418,431,441],[1111.5,368,409,419,420],[1115,368,409,414,432],[1118.5,363,413,414,455],[1122,379,390,415,438],[1126,376,390,425,442],[1129,407,425,429,446],[1133,401,428,487,487],[1136.5,466,485,503,518],[1140.5,483,503,546,562,1],[1143.5,525,545,547,555]];
candles.forEach(([x, h, t, b, l, blue]) => {
  rect(x - .5, h, 1, l - h, 'fill="#45484e"');
  if (b > t) rect(x - 1.2, t, 2.3, b - t, `fill="${blue ? '#2752a8' : '#2b2d34'}"`);
});

// weekly levels
const purple = 'stroke="#59406f" stroke-width="1" stroke-dasharray="4 3.500"';
const solid = 'stroke="#0c0d10" stroke-width="1.400"';
const dash = 'stroke="#22242b" stroke-width="1.200" stroke-dasharray="4 3"';
line(1017, 255.5, 1206, 255.5, purple);
line(1067, 255.3, 1096, 255.3, solid); line(1114, 255.3, 1144, 255.3, solid);
line(1045, 327.3, 1068, 327.3, solid);
line(1017, 518.5, 1206, 518.5, purple);
line(1049, 518.3, 1078, 518.3, solid); line(1111, 518.3, 1140, 518.3, solid);
line(987, 526.3, 1055, 526.3, solid); line(1072, 526.3, 1140, 526.3, solid);
line(1103, 363.5, 1188, 363.5, dash);
line(1104, 461, 1203, 461, dash);
const navy = 'stroke="#2d4590" stroke-width="1"';
line(1140, 368.5, 1206, 368.5, navy); line(1140, 571.5, 1206, 571.5, navy);
text(1105, 258, 'tag', 'PWH', 13); text(1094.5, 521, 'tag', 'PWL+RH4', 28); text(1063, 529, 'tag', 'PWL', 12);
text(1191, 366.5, 'level', '0.79', 15.5); text(1191, 569.5, 'level', '0.79', 15.5);

// axes
line(1206.5, 53, 1206.5, 667, 'stroke="#a9adb5" stroke-width=".7"');
line(37, 647.5, 1247, 647.5, 'stroke="#aeb1b9" stroke-width=".8"');
for (let i = 0; i <= 25; i++) text(1212, 99.1 + i * 21.4, 'price', (0.8025 - i * 0.0005).toFixed(5), 28);
line(1212, 76.5, 1240, 76.5, 'stroke="#eceef3" stroke-opacity=".8" stroke-dasharray="3 1"');
rect(1207, 541, 37, 21, 'fill="#000"');
text(1212, 550, 'price', '0.79199', 28); text(1212, 559, 'price', '38:08', 20);
rect(1208.500, 56, 36, 17, 'rx="2" fill="#fff"');
out += '<text x="1211.500" y="68" font-size="8.500" fill="#30333a" textLength="14" lengthAdjust="spacingAndGlyphs">CHF</text><path d="M1237.500 64.200l2 2 2-2" stroke="#333"/>';
[['13',41],['15',84.5],['17',128],['21',171],['23',215],['26',254.5],['29',301.5],['Nov',363.5],['5',410],['7',454],['11',498],['13',541],['16',581.5],['19',628.5],['21',672],['25',715],['27',758.5],['Dec',803],['3',846],['5',889],['9',933],['11',976.5],['14',1016.5],['17',1064],['19',1107.5],['23',1150.5],['25',1194]]
  .forEach(([s, x]) => text(x, 659.500, 'date', s));
out += '<g transform="translate(1227 657)" stroke="#30333a"><path d="M-2.500-4.300h5L5 0 2.500 4.300h-5L-5 0z"/><circle r="1.700"/></g>';

// notes
text(621.5, 68.3, 'memo', 'PATIENCE AND KEEP IT SIMPLE', 89);
text(621.5, 80, 'memo', "It's just Money, but try to save it.", 98);
text(604.5, 626, 'stamp', '22/12/2025', 35);
text(599, 637.3, 'stamp', 'USDCHF | 240', 42);

// economic events
const flag = x => { out += `<use href="#flag" x="${x - 8}" y="630.500" width="16" height="16"/>`; };
[73.5,225.5,244,316,378,421.5,465,643,661,657,722,744,813,857,900.5,944,969,1049,1092.5,1122,1118,1158].forEach(flag);
out += '<circle cx="1143.500" cy="638.500" r="6.500" fill="#fff" stroke="#7d2b9c" stroke-width="1.200"/><path d="M1145 634.500l-4 4.500h2.500l-1 3.500 4-4.700h-2.500z" fill="#7d2b9c"/>';

// logo
out += '<g transform="translate(45.500 628)" fill="#000" stroke="#fff" stroke-width="2" paint-order="stroke"><path d="M0 0h8v9.500H4V4.200H0z"/><circle cx="10.700" cy="2" r="2"/><path d="M14.500 0H19.500L15.500 9.500H11z"/></g>';

// legend
out += '<g transform="translate(49.500 64.500)"><circle cx="2" cy="-2" r="4.300" fill="#d02f45"/><path d="M2-4.500v4M0-2.500h4" stroke="#fff"/><circle cx="-1.500" cy="1.500" r="4.300" fill="#e8ebf2"/><path d="M-5 2.500h7M-4 4.500h5" stroke="#d6364b"/><path d="M-1.500-2.800v4.300h-4.300a4.300 4.300 0 0 1 4.300-4.300z" fill="#3d86d6"/></g>';
text(58, 68.3, 'title', 'USDCHF · U.S. Dollar / Swiss Franc · 4h · FOREXCOM', 243);
out += '<circle cx="312" cy="64.500" r="5" fill="#7fb5aa" opacity=".35"/><circle cx="312" cy="64.500" r="2.800" fill="#1c9a73"/>';
text(323, 67.8, 'ohlc', '<tspan>O</tspan>0.79200', 37);
text(364, 67.8, 'ohlc', '<tspan>H</tspan>0.79247', 37);
text(405, 67.8, 'ohlc', '<tspan>L</tspan>0.79180', 35);
text(444.5, 67.8, 'ohlc', '<tspan>C</tspan>0.79199', 36.5);
rect(44.500, 75, 23, 12.500, 'fill="#b9bcc3" fill-opacity=".8" stroke="#d6d8de"');
out += '<path d="M47 80l2.500 2 2.500-2" stroke="#30333a"/>';
text(56, 84.5, 'ohlc', '12', 9);
svg.innerHTML = out;
```
